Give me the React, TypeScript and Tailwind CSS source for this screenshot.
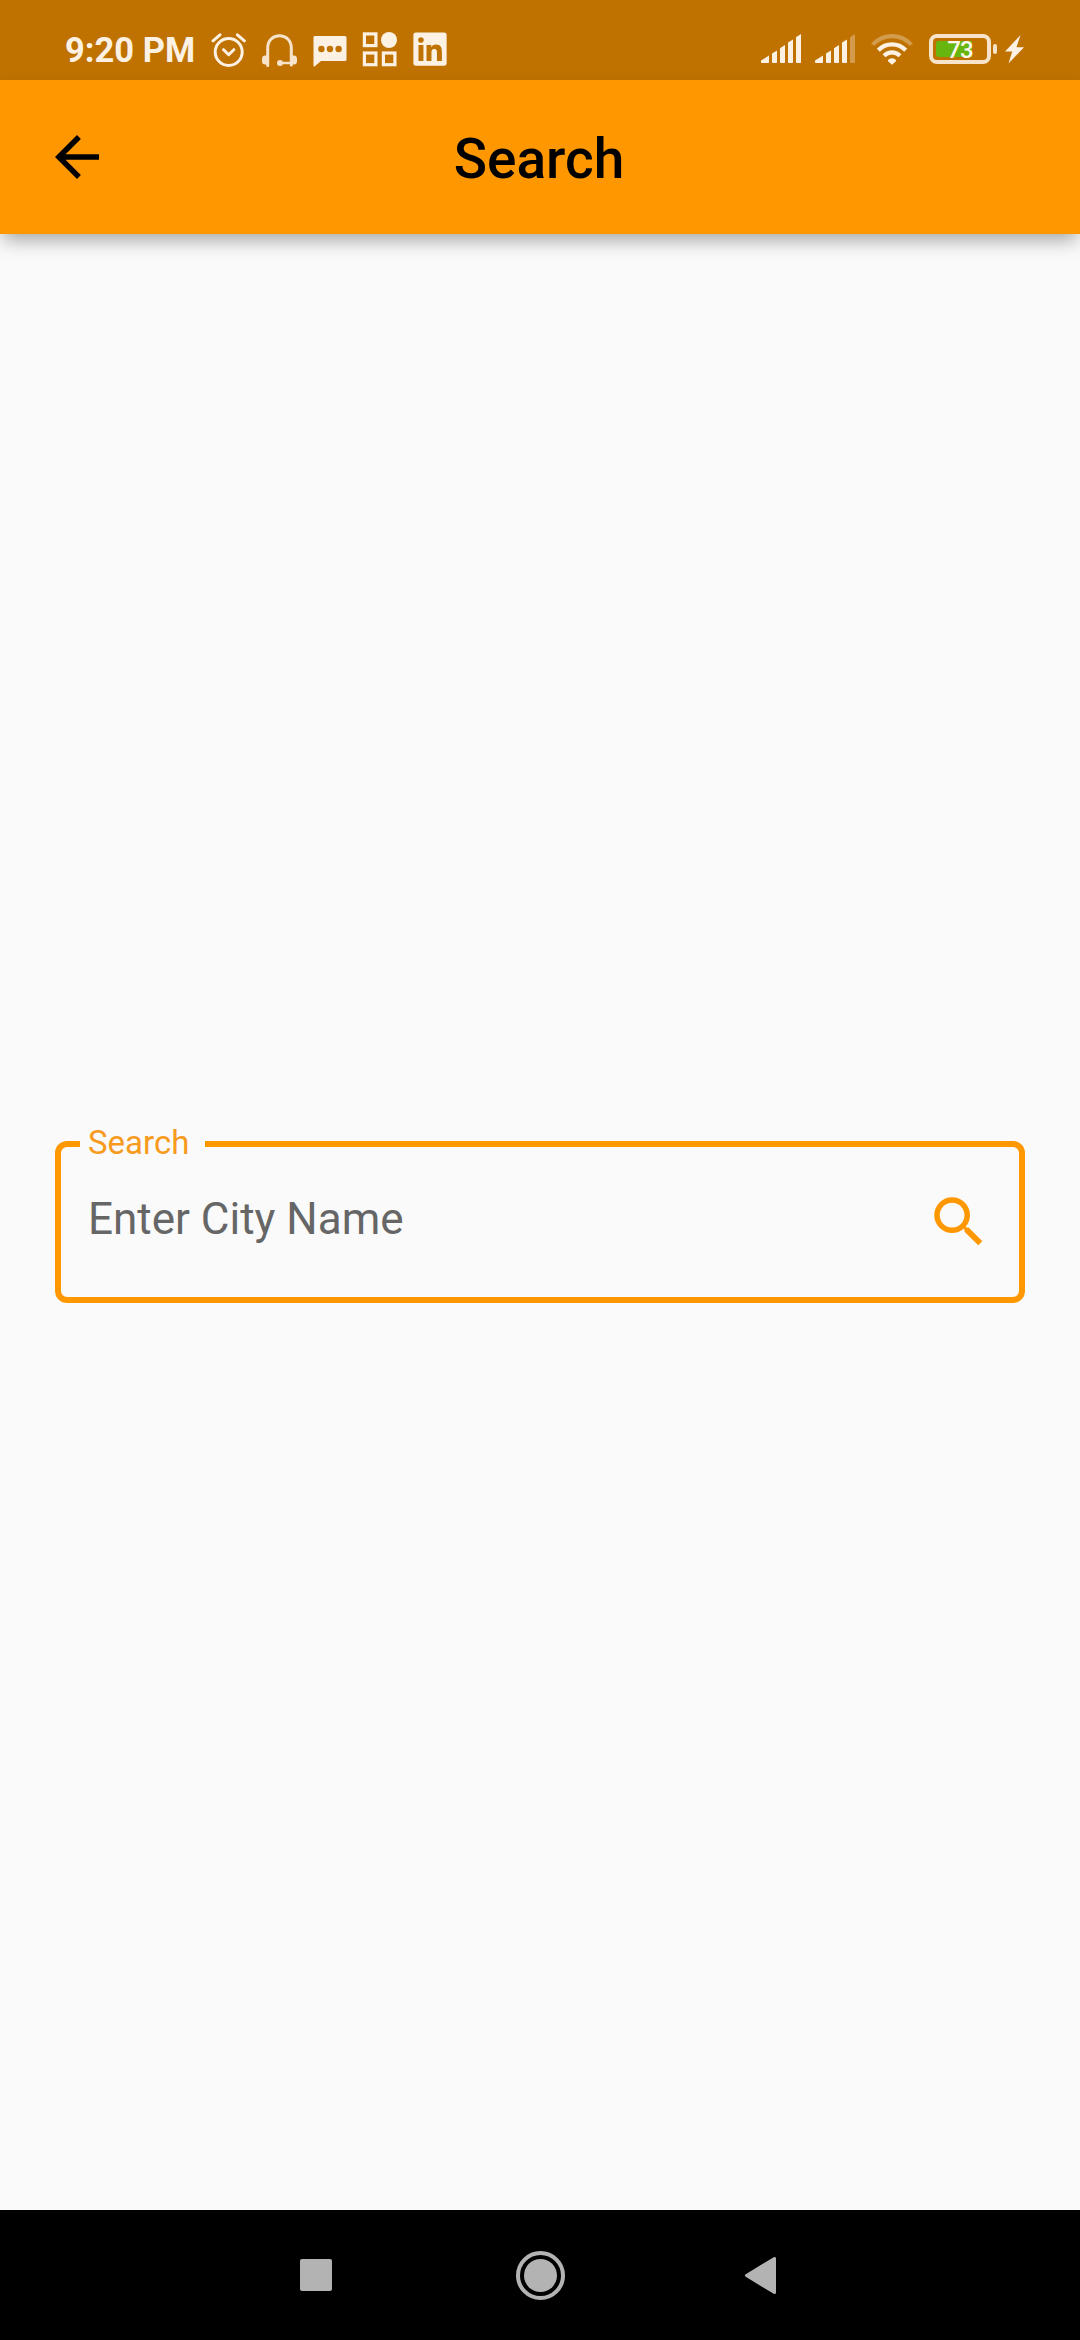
import React from "react";
import { FaLinkedin } from "react-icons/fa";
import { MdArrowBack, MdSearch } from "react-icons/md";

function Signal({ weak = false }: { weak?: boolean }) {
  return (
    <svg width="40" height="30" viewBox="0 0 40 30" fill="currentColor">
      <path d="M.8 29Q0 29 0 28.2V26.6L8 21.5V28.2Q8 29 7.2 29z" />
      <path d="M11 19.5L16 16.4V28.2Q16 29 15.2 29H11.8Q11 29 11 28.2z" />
      <path d="M19 14.2L24 11V28.2Q24 29 23.2 29H19.8Q19 29 19 28.2z" />
      <path d="M27 8.6L32 5.4V28.2Q32 29 31.2 29H27.8Q27 29 27 28.2z" />
      <path d="M35 3.2L40 0V28.2Q40 29 39.2 29H35.8Q35 29 35 28.2z" opacity={weak ? 0.33 : 1} />
    </svg>
  );
}

function StatusBar() {
  return (
    <div className="flex h-20 shrink-0 items-start bg-[#bf7200] text-[#fcf1e3]">
      <span className="ml-[65px] mt-[30px] w-[130px] whitespace-nowrap text-[34.5px] leading-[41px] font-bold">9:20 PM</span>
      <svg className="ml-4 mt-[33px]" width="35" height="34" viewBox="0 0 35 34" fill="none" stroke="currentColor" strokeWidth="3" strokeLinecap="round" strokeLinejoin="round">
        <circle cx="17.7" cy="19" r="13.5" />
        <path d="M12.6 16.7l5.1 5 5.1-5M2 7.8l7-6M33.4 7.8l-7-6" />
      </svg>
      <svg className="ml-4 mt-[33px] text-[#f7e3c9]" width="35" height="34" viewBox="0 0 35 34" fill="none" stroke="currentColor" strokeWidth="3">
        <path d="M5.7 32.5V15C5.7 7.5 11 2.7 17.5 2.7S29.3 7.5 29.3 15V32" strokeLinecap="round" />
        <path d="M18 30H29" strokeWidth="2.4" />
        <path d="M7 22.5H3Q0 22.5 0 26t0 2Q0 31.5 3 31.5H7zM28 22.5h4q3 0 3 3.500v2q0 3.500-3 3.500h-4z" fill="currentColor" stroke="none" />
        <circle cx="18" cy="30" r="3" fill="currentColor" stroke="none" />
      </svg>
      <svg className="ml-4 mt-9" width="34" height="32" viewBox="0 0 34 32">
        <path fill="currentColor" d="M1.500 0H32Q33.500 0 33.500 1.500V23.500Q33.500 25 32 25H8L1.500 30.500Q.5 31 .5 29.500V1.500Q.5 0 1.500 0z" />
        <g fill="#bf7200">
          <circle cx="8.400" cy="13" r="3.200" />
          <circle cx="17" cy="13" r="3.200" />
          <circle cx="25.600" cy="13" r="3.200" />
        </g>
      </svg>
      <svg className="ml-[15px] mt-8" width="36" height="35" viewBox="0 0 36 35" fill="none" stroke="currentColor" strokeWidth="3.200">
        <rect x="2.400" y="1.900" width="11.500" height="11.700" />
        <rect x="2.400" y="21" width="11.500" height="11.700" />
        <rect x="21.400" y="21" width="11.500" height="11.700" />
        <circle cx="27" cy="8" r="8" fill="currentColor" stroke="none" />
      </svg>
      <FaLinkedin className="ml-[15px] mt-[30px] h-[38px] w-[34px]" />
      <div className="ml-auto mt-[34px] flex w-[94px] justify-between">
        <Signal />
        <Signal weak />
      </div>
      <svg className="ml-4 mt-[33px]" width="42" height="33" viewBox="0 0 42 33" fill="none" stroke="currentColor" strokeWidth="4.200">
        <path d="M1.600 11.600C12.500 .2 29.500 .2 40.400 11.600" opacity=".33" />
        <path d="M7.300 17.300C15 9.500 27 9.500 34.700 17.300" />
        <path d="M13 22.800C17.800 18.200 24.200 18.200 29 22.800" />
        <path d="M21 31.800l-3.700-3.300q-.8-1.200.5-2.200 3.200-2.200 6.400 0 1.300 1 .5 2.200z" fill="currentColor" stroke="none" />
      </svg>
      <div className="relative ml-4 mt-[34px] flex h-[30px] w-[62px] items-center rounded-[8px] border-4 border-[#f7e3c9] pl-[3px]">
        <div className="h-4 w-9 rounded-l-[3px] bg-[#67b50f]" />
        <span className="absolute inset-x-0 top-0 text-center text-[24px] leading-6 font-medium tracking-[-1px] text-[#fff7ed]">73</span>
      </div>
      <div className="ml-0.5 mt-11 h-2.5 w-1 rounded-[2px] bg-[#f7e3c9]" />
      <svg className="ml-2 mr-14 mt-[35px]" width="19" height="29" viewBox="0 0 19 29" fill="currentColor">
        <path d="M15.500 0L0 16.500H7.200L3.500 28.500 19 12.300H11.500z" />
      </svg>
    </div>
  );
}

function AppBar() {
  return (
    <header className="z-10 grid h-[154px] shrink-0 grid-cols-[1fr_auto_1fr] items-center bg-[#ff9800] text-black shadow-[0_9px_18px_-3px_rgba(0,0,0,0.34)]">
      <MdArrowBack className="ml-11 size-[66px]" />
      <h1 className="mr-0.5 mt-1 text-[55px] leading-[64px] font-medium">Search</h1>
    </header>
  );
}

function SearchField() {
  return (
    <div className="relative mx-[55px] flex h-[162px] items-center justify-between rounded-[12px] border-[6px] border-[#ff9800] px-[27px]">
      <label className="absolute left-[19px] top-[-23px] w-[125px] bg-[#fafafa] pl-2 text-[33px] leading-[38px] text-[#f79b1e]">Search</label>
      <span className="mb-[7px] text-[44px] leading-[52px] text-[#666]">Enter City Name</span>
      <MdSearch className="size-[66px] text-[#ff9800]" />
    </div>
  );
}

function NavBar() {
  return (
    <nav className="flex h-[130px] shrink-0 items-center bg-black text-[#b3b3b3]">
      <div className="ml-[300px] size-8 rounded-[2px] bg-current" />
      <svg className="ml-[184px]" width="49" height="49" viewBox="0 0 49 49">
        <circle cx="24.500" cy="24.500" r="22.500" fill="none" stroke="currentColor" strokeWidth="4" />
        <circle cx="24.500" cy="24.500" r="16.500" fill="currentColor" />
      </svg>
      <svg className="ml-[180px]" width="31" height="37" viewBox="0 0 31 37">
        <path d="M1.500 18.500L29.500 1.500V35.500z" fill="currentColor" stroke="currentColor" strokeWidth="3" strokeLinejoin="round" />
      </svg>
    </nav>
  );
}

export default function App() {
  return (
    <div className="flex h-[2340px] w-[1080px] flex-col overflow-hidden bg-[#fafafa] font-['Roboto',sans-serif]">
      <StatusBar />
      <AppBar />
      <main className="flex flex-1 flex-col justify-center">
        <SearchField />
      </main>
      <NavBar />
    </div>
  );
}
